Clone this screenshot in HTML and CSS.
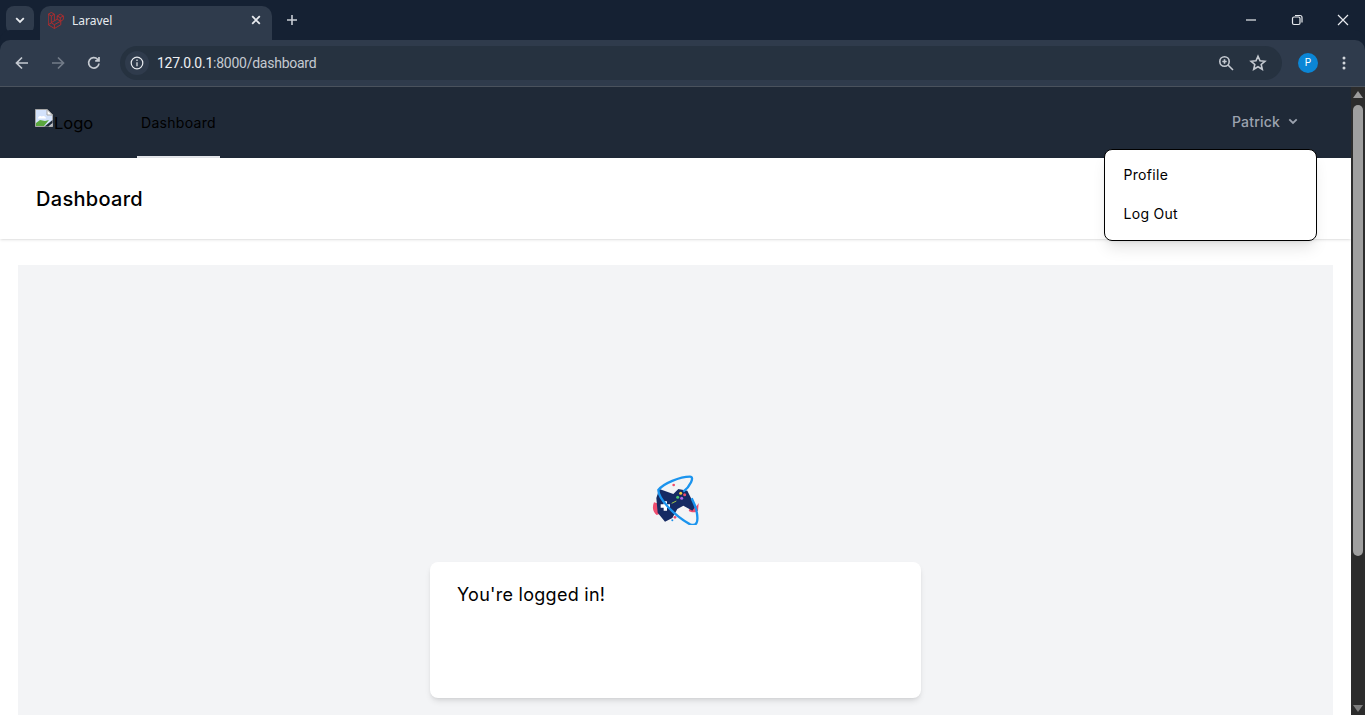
FILE: index.html
```
<!DOCTYPE html>
<html lang="en">
<head>
<meta charset="utf-8">
<title>Laravel</title>
<link rel="stylesheet" href="styles.css">
</head>
<body>
<div class="tabstrip">
  <button class="tabsearch"><svg width="12" height="12" viewBox="0 0 12 12"><path d="M2.200 4.200 6 8l3.800-3.800" class="st2"/></svg></button>
  <div class="tab">
    <svg class="favicon" width="16" height="17" viewBox="0 0 50 52"><path d="M.8 6.300 10.400.8 20 6.300V27l8.800-5V11.700l9.600-5.500 9.600 5.500v11L40 28v11.200L20 51 .8 39.200zM.8 6.300l9.600 5.600L20 6.300M10.400 11.900v21.600L20 39l20-11M10.400 33.500.8 39.200M20 39v12M20 27l-9.600 5.500M28.800 11.700l9.600 5.500 9.600-5.500M38.400 17.200v11M28.800 22l9.600 5.500" class="lara"/></svg>
    <span class="tabtitle">Laravel</span>
    <svg class="tabclose" width="10" height="10" viewBox="0 0 10 10"><path d="M1.200 1.200l7.600 7.600M8.800 1.200 1.200 8.800" class="st2"/></svg>
  </div>
  <svg class="newtab" width="12" height="12" viewBox="0 0 12 12"><path d="M6 1v10M1 6h10" class="st2g"/></svg>
  <div class="wincontrols">
    <svg width="12" height="12" viewBox="0 0 12 12"><path d="M1 6h10" class="st1"/></svg>
    <svg width="12" height="12" viewBox="0 0 12 12"><rect x="1.500" y="3" width="7.500" height="7.500" rx="1.500" class="st1"/><path d="M4 1.500h5a2 2 0 0 1 2 2v5" class="st1"/></svg>
    <svg width="12" height="12" viewBox="0 0 12 12"><path d="M1 1l10 10M11 1 1 11" class="st1"/></svg>
  </div>
</div>
<div class="toolbar">
  <svg class="navicon" width="16" height="16" viewBox="0 0 16 16"><path d="M14 8H3M8 2.500 2.500 8 8 13.500" class="nav"/></svg>
  <svg class="navicon dim" width="16" height="16" viewBox="0 0 16 16"><path d="M2 8h11M8 2.500 13.500 8 8 13.500" class="nav"/></svg>
  <svg class="navicon" width="16" height="16" viewBox="0 0 16 16"><path d="M13 8.500A5.200 5.200 0 1 1 11.600 4.300L13 5.800M13 2v3.800H9.200" class="nav"/></svg>
  <div class="omnibox">
    <span class="infobtn"><svg width="16" height="16" viewBox="0 0 16 16"><circle cx="8" cy="8" r="5.800" class="st1"/><path d="M8 7.300v4M8 4.500v1.500" class="st1"/></svg></span>
    <span class="url"><span class="host">127.0.0.1</span>:8000/dashboard</span>
    <svg class="zoomicon" width="16" height="16" viewBox="0 0 16 16"><circle cx="6.500" cy="6.500" r="4.700" class="st2b"/><path d="M10 10l5 5M4.300 6.500h4.400M6.500 4.300v4.400" class="st2b"/></svg>
    <svg class="star" width="18" height="18" viewBox="0 0 18 18"><path d="M9 2.300l2 4.500 4.900.5-3.700 3.200 1.100 4.800L9 12.800l-4.300 2.500 1.100-4.800-3.700-3.200 4.900-.5z" class="st2b"/></svg>
  </div>
  <span class="avatar">P</span>
  <svg class="menu" width="4" height="14" viewBox="0 0 4 14"><circle cx="2" cy="2" r="1.500"/><circle cx="2" cy="7" r="1.500"/><circle cx="2" cy="12" r="1.500"/></svg>
</div>
<div class="viewport">
  <div class="page">
    <nav class="appnav">
      <div class="brand">
        <svg class="broken" width="18" height="18" viewBox="0 0 18 18"><path d="M.5.500h11.500l5.500 5.500v11.500H.5z" fill="#d3e2fb" stroke="#a6a6a6"/><path d="M12 .5V6h5.500z" fill="#fff" stroke="#a6a6a6"/><path d="M3 9.500c0-2 2-3 3.500-2 2-1.500 4.500 0 4.500 2z" fill="#fff"/><path d="M1 17v-3l4-3 5 1 4-1-5 6z" fill="#5aa63e"/><path d="M9.500 17.500 17.500 11v3l-4 3.500z" fill="#1f2937"/><path d="M14 17.500l3.500-3v3z" fill="#b5b5b5"/></svg><span class="logoalt">Logo</span>
      </div>
      <a class="navlink">Dashboard</a>
      <div class="user"><span>Patrick</span><svg width="12" height="12" viewBox="0 0 12 12"><path d="M2.300 4.300 6 8l3.700-3.700" class="chev"/></svg></div>
    </nav>
    <div class="menupop">
      <a>Profile</a>
      <a>Log Out</a>
    </div>
    <header class="pagehead"><h2>Dashboard</h2></header>
    <main class="content">
      <div class="panel">
        <svg class="gamelogo" width="48" height="50" viewBox="36 30 144 150">
          <path d="M42 112c-6 14-4 28 8 38l10-4-4-30zM150 128c10 2 20-2 26-14l-2 24c-8 6-20 4-28 0z" fill="#ef4d6f"/>
          <path d="M58 72l42 15 15-15 27 5 24 48-9 12-27-15-18 10-15 27-22 11-22-27-4-44z" fill="#152a63"/>
          <path d="M62 118h9v-9h10v9h9v10h-9v9h-10v-9h-9z" fill="#fff"/>
          <circle cx="122" cy="85" r="4.500" fill="#f5c93a"/><circle cx="134" cy="89" r="4.500" fill="#ef4d6f"/><circle cx="113" cy="97" r="4.500" fill="#4bc96f"/><circle cx="125" cy="100" r="4.500" fill="#b06ae8"/>
          <path d="M95 115l14-7" stroke="#9ec34a" stroke-width="3" fill="none"/>
          <path d="M130 80C150 65 165 35 150 35 120 35 70 55 55 75 55 100 100 150 150 178 170 186 176 170 170 140 168 125 160 110 155 100" fill="none" stroke="#1b94ee" stroke-width="7"/>
          <circle cx="101" cy="60" r="4" fill="#ef4d6f"/><circle cx="105" cy="157" r="4" fill="#ef4d6f"/><circle cx="97" cy="166" r="3" fill="#1e90e8"/>
        </svg>
        <div class="card">You're logged in!</div>
      </div>
    </main>
  </div>
  <div class="scrollbar">
    <span class="arrowup"></span>
    <span class="thumb"></span>
    <span class="arrowdown"></span>
  </div>
</div>
</body>
</html>
```
FILE: styles.css
```
* { box-sizing: border-box; }
html, body { margin: 0; height: 715px; overflow: hidden; }
body { font-family: Inter, "Liberation Sans", sans-serif; background: #fff; display: flex; flex-direction: column; position: relative; }

.st1 { fill: none; stroke: #e8ebef; stroke-width: 1.200; }
.st2 { fill: none; stroke: #e8ebef; stroke-width: 1.800; }
.st2g { fill: none; stroke: #c9ced5; stroke-width: 1.600; }
.st2b { fill: none; stroke: #c5cad1; stroke-width: 1.600; }
.nav { fill: none; stroke: #c5cad1; stroke-width: 1.700; }
.lara { fill: none; stroke: #b72c2c; stroke-width: 2.800; stroke-linejoin: round; }
.chev { fill: none; stroke: #9ca3af; stroke-width: 1.800; }

.tabstrip { height: 40px; flex: none; background: #152133; display: flex; align-items: flex-end; padding-left: 6px; }
.tabsearch { width: 28px; height: 28px; margin-bottom: 6px; border: 0; padding: 0; border-radius: 8px; background: #2f3b4c; display: flex; align-items: center; justify-content: center; }
.tab { width: 232px; height: 34px; margin-left: 6px; background: #2f3b4c; border-radius: 10px 10px 0 0; display: flex; align-items: center; padding: 0 11px 6px 8px; position: relative; }
.favicon { flex: none; }
.tabtitle { margin-left: 8px; flex: 1; color: #e8ebef; font: 12px "Noto Sans", sans-serif; }
.newtab { margin: 0 0 14px 14px; }
.wincontrols { margin-left: auto; display: flex; justify-content: flex-end; gap: 34px; padding-right: 16px; height: 40px; align-items: center; }

.toolbar { height: 47px; flex: none; background: #2f3b4c; border-bottom: 1px solid #4a525d; border-radius: 10px 10px 0 0; display: flex; align-items: center; padding: 0 0 1px 14px; box-shadow: 0 -10px 0 #152133; }
.navicon { margin-right: 20px; flex: none; }
.dim { opacity: .45; }
.omnibox { margin-left: -2px; width: 1162px; height: 34px; border-radius: 17px; background: #263240; display: flex; align-items: center; padding: 0 15px 0 5px; }
.infobtn { width: 24px; height: 24px; border-radius: 50%; background: #2f3b4c; display: flex; align-items: center; justify-content: center; }
.url { margin-left: 8px; flex: 1; color: #c5cad1; font: 14px Roboto, sans-serif; letter-spacing: -.25px; }
.host { color: #eef0f3; }
.zoomicon { margin-right: 15px; }
.avatar { width: 20px; height: 20px; margin-left: 16px; border-radius: 50%; background: #0b86d6; color: #fff; font: 10px Roboto, sans-serif; display: flex; align-items: center; justify-content: center; }
.menu { margin-left: 24px; fill: #d3d7dc; }

.viewport { flex: 1; min-height: 0; display: flex; position: relative; }
.page { flex: 1; min-width: 0; position: relative; overflow: hidden; display: flex; flex-direction: column; }

.appnav { height: 71px; flex: none; background: #1f2937; display: flex; padding-left: 35px; }
.brand { display: flex; align-items: flex-start; padding-top: 22px; width: 102px; font-size: 16.500px; color: #000; }
.broken { flex: none; }
.logoalt { margin: 4px 0 0 1px; }
.navlink { width: 83px; height: 71px; border-bottom: 2px solid #e5e7eb; text-align: center; font-size: 14px; line-height: 71px; color: #000; letter-spacing: .3px; }
.user { margin-left: auto; margin-right: 52px; display: flex; align-items: center; gap: 7px; color: #9ca3af; font-size: 14px; font-weight: 500; letter-spacing: .2px; padding-bottom: 3px; }

.menupop { position: absolute; left: 1104px; top: 62px; width: 213px; height: 92px; background: #fff; border: 1px solid #000; border-radius: 8px; box-shadow: 0 10px 15px -3px rgba(0,0,0,.1), 0 4px 6px -4px rgba(0,0,0,.1); padding: 6px 0; z-index: 2; color: #000; font-size: 14px; letter-spacing: .3px; }
.menupop a { display: block; height: 39px; line-height: 38px; padding-left: 18.500px; }

.pagehead { height: 81px; flex: none; background: #fff; box-shadow: 0 1px 3px rgba(0,0,0,.1), 0 1px 2px -1px rgba(0,0,0,.1); padding: 0 36px; display: flex; align-items: center; position: relative; }
.pagehead h2 { margin: 0; font-size: 20px; font-weight: 500; color: #000; letter-spacing: .3px; }

.content { flex: 1; min-height: 0; padding: 26px 18px 0; }
.panel { height: 600px; background: #f3f4f6; display: flex; flex-direction: column; align-items: center; padding-top: 210px; }
.gamelogo { margin-left: 1px; flex: none; }
.card { margin: 37px 0 0 0; width: 491px; height: 136px; border-radius: 8px; background: #fff; box-shadow: 0 4px 6px -1px rgba(0,0,0,.1), 0 2px 4px -2px rgba(0,0,0,.1); padding: 21px 27px; font-size: 18px; line-height: 24px; color: #000; letter-spacing: .27px; }

.scrollbar { width: 14px; flex: none; background: #2c2c2c; position: relative; display: flex; flex-direction: column; align-items: center; padding-top: 4px; }
.arrowup { width: 0; height: 0; border-left: 5px solid transparent; border-right: 5px solid transparent; border-bottom: 7px solid #9c9c9c; }
.thumb { width: 10px; height: 451px; margin-top: 7px; border-radius: 5px; background: #9f9f9f; }
.arrowdown { position: absolute; bottom: 3px; width: 0; height: 0; border-left: 5px solid transparent; border-right: 5px solid transparent; border-top: 7px solid #7d7d7d; }
```
